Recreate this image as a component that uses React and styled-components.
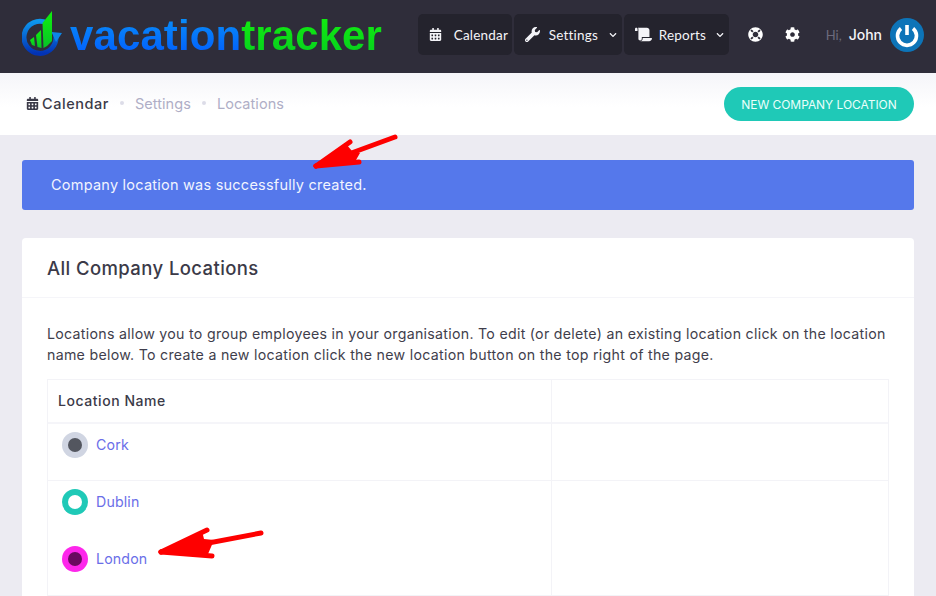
import React from 'react';
import styled, { createGlobalStyle } from 'styled-components';
import { FaCalendarAlt, FaWrench, FaScroll, FaLifeRing, FaCog, FaChevronDown } from 'react-icons/fa';

const GlobalStyle = createGlobalStyle`
  html, body {
    margin: 0;
    padding: 0;
    background: #ecebf2;
    font-family: "Inter", "Liberation Sans", sans-serif;
  }
  * { box-sizing: border-box; }
`

const Header = styled.header`
  height: 73px;
  background: #2f2d3a;
  display: flex;
  align-items: center;
  padding: 0 12px 4px 22px;
`

const Logo = styled.div`
  display: flex;
  align-items: center;
  flex: 1;
`

const LogoText = styled.span`
  font-family: "Liberation Sans", sans-serif;
  font-weight: 700;
  font-size: 42px;
  letter-spacing: 0.1px;
  margin-left: ${p => p.$offset || 0}px;
  margin-top: 3px;
  background-image: linear-gradient(${p => p.$from}, ${p => p.$to});
  -webkit-background-clip: text;
  background-clip: text;
  color: transparent;
  line-height: 48px;
`

const Nav = styled.nav`
  display: flex;
  align-items: center;
  gap: 2px;
`

const NavItem = styled.div`
  width: ${p => p.$width}px;
  height: 41px;
  background: #24232d;
  border-radius: 5px;
  display: flex;
  align-items: center;
  padding-left: 11px;
  color: #f4f4f8;
  font-family: "Lato", sans-serif;
  font-size: 13.5px;
  letter-spacing: 0.2px;
`

const NavLabel = styled.span`
  margin-left: ${p => p.$gap}px;
  flex: 1;
`

const Chevron = styled(FaChevronDown)`
  font-size: 8px;
  margin-right: 5px;
`

const Tools = styled.div`
  display: flex;
  align-items: center;
  margin-left: 19px;
  gap: 22px;
  color: #fff;
  font-size: 15px;
`

const User = styled.div`
  display: flex;
  align-items: center;
  margin-left: 26px;
`

const Hi = styled.span`
  color: #6c6a7c;
  font-family: "Lato", sans-serif;
  font-size: 13px;
  margin-right: 7px;
`

const Name = styled.span`
  color: #f4f4f8;
  font-weight: 500;
  font-size: 14px;
  margin-right: 8px;
`

const SubHeader = styled.div`
  height: 62px;
  background: linear-gradient(#f5f5f9, #fff 55%);
  display: flex;
  align-items: center;
  padding: 0 22px 0 26px;
`

const Crumbs = styled.div`
  flex: 1;
  display: flex;
  align-items: center;
  padding-bottom: 2px;
  font-size: 14.5px;
  letter-spacing: 0.05px;
  color: #afaec6;
`

const CrumbHome = styled.span`
  display: flex;
  align-items: center;
  gap: 3px;
  color: #3b3a48;
  font-weight: 500;
  letter-spacing: 0.55px;
`

const Dot = styled.span`
  width: 4px;
  height: 4px;
  border-radius: 50%;
  background: #dcdce8;
  margin: 0 ${p => p.$space}px;
`

const AddButton = styled.button`
  width: 190px;
  height: 34px;
  border: none;
  border-radius: 17px;
  background: #1fc9b7;
  color: #eafffb;
  font-family: "Inter", sans-serif;
  font-size: 12px;
  letter-spacing: -0.05px;
  padding: 0;
`

const Content = styled.main`
  padding: 25px 22px 0;
`

const Alert = styled.div`
  height: 50px;
  background: #5578eb;
  border-radius: 3px;
  display: flex;
  align-items: center;
  padding: 0 0 2px 29px;
  color: #f1f4ff;
  font-size: 14.5px;
  letter-spacing: 0.23px;
`

const Card = styled.section`
  margin-top: 28px;
  background: #fff;
  border-radius: 4px 4px 0 0;
  height: 358px;
`

const CardHead = styled.div`
  height: 60px;
  border-bottom: 1px solid #f5f5f9;
  display: flex;
  align-items: center;
  padding-left: 25px;
`

const CardTitle = styled.h3`
  margin: 0;
  font-size: 18.5px;
  font-weight: 500;
  color: #3b3a48;
  letter-spacing: 0.4px;
`

const CardBody = styled.div`
  padding: 25px 25px 0;
`

const Intro = styled.p`
  margin: 0 0 14px;
  font-size: 14.2px;
  line-height: 21px;
  letter-spacing: 0.28px;
  color: #3f3e4c;
`

const Table = styled.div`
  border: 1px solid #f3f3f7;
  display: grid;
  grid-template-columns: 504px 1fr;
`

const HeadCell = styled.div`
  height: 44px;
  border-bottom: 2px solid #f5f5f9;
  border-right: ${p => (p.$last ? 'none' : '1px solid #f3f3f7')};
  display: flex;
  align-items: center;
  padding: 0 0 2px 10px;
  font-size: 14px;
  font-weight: 500;
  color: #3b3a48;
  letter-spacing: 0.55px;
`

const Cell = styled.div`
  height: 57px;
  border-right: ${p => (p.$last ? 'none' : '1px solid #f3f3f7')};
  border-bottom: ${p => (p.$line ? '1px solid #f3f3f7' : 'none')};
  display: flex;
  align-items: flex-start;
  padding: 8px 0 0 14px;
`

const Swatch = styled.span`
  width: 26px;
  height: 26px;
  border-radius: 50%;
  background: ${p => p.$ring};
  display: flex;
  align-items: center;
  justify-content: center;

  &::after {
    content: "";
    width: ${p => p.$inner}px;
    height: ${p => p.$inner}px;
    border-radius: 50%;
    background: ${p => p.$core};
  }
`

const LocationLink = styled.a`
  margin: 3px 0 0 8px;
  font-size: 14.2px;
  line-height: 20px;
  letter-spacing: 0.15px;
  color: #6a6ee8;
`

const Arrow = styled.svg`
  position: absolute;
  left: ${p => p.$left}px;
  top: ${p => p.$top}px;
  pointer-events: none;
`

const locations = [
  { name: 'Cork', ring: '#d0d5e2', core: '#53565f', inner: 14, line: true },
  { name: 'Dublin', ring: '#1fc9b7', core: '#ffffff', inner: 14, line: false },
  { name: 'London', ring: '#fd27eb', core: '#690a60', inner: 14, line: false },
]

const LogoMark = () => (
  <svg width="45" height="50" viewBox="0 0 45 50">
    <defs>
      <linearGradient id="ring" x1="0" y1="0" x2="0" y2="1">
        <stop offset="0" stopColor="#0d96ee" />
        <stop offset="1" stopColor="#0232b4" />
      </linearGradient>
      <linearGradient id="bars" x1="0" y1="0" x2="0" y2="1">
        <stop offset="0" stopColor="#10f00c" />
        <stop offset="1" stopColor="#07c428" />
      </linearGradient>
    </defs>
    <path d="M33.8 25 A16 16 0 1 1 25 13" fill="none" stroke="url(#ring)" strokeWidth="5" />
    <path d="M29.5 22 L40 23 L34 32 Z" fill="#0d86e6" />
    <path d="M8 30 L12 27 L13 36 L10 35 Z" fill="url(#bars)" />
    <path d="M14 25 L19 20 L19.5 38 L15.5 37 Z" fill="url(#bars)" />
    <path d="M20.5 13 L30 1 L30 31 L25 36 L21.5 38 Z" fill="url(#bars)" />
  </svg>
)

const PowerBadge = () => (
  <svg width="34" height="34" viewBox="0 0 34 34">
    <circle cx="17" cy="17" r="17" fill="#0d74b8" />
    <path d="M11 10.5 A9.5 9.5 0 1 0 23 10.5" fill="none" stroke="#fff" strokeWidth="3.6" />
    <path d="M17 7 V17" stroke="#fff" strokeWidth="3.6" />
  </svg>
)

const RedArrow = ({ left, top, width, height, lines, body }) => (
  <Arrow $left={left} $top={top} width={width} height={height} viewBox={`0 0 ${width} ${height}`}>
    <path d={body} fill="#fe0000" />
    {lines.map(d => (
      <path key={d} d={d} fill="none" stroke="#fe0000" strokeWidth="5" strokeLinecap="round" />
    ))}
  </Arrow>
)

const App = () => (
  <>
    <GlobalStyle />
    <Header>
      <Logo>
        <LogoMark />
        <LogoText $offset={3} $from="#0a94f6" $to="#0058ff">vacation</LogoText>
        <LogoText $from="#14f00e" $to="#04cc20">tracker</LogoText>
      </Logo>
      <Nav>
        <NavItem $width={94}>
          <FaCalendarAlt size={13} />
          <NavLabel $gap={12}>Calendar</NavLabel>
        </NavItem>
        <NavItem $width={108}>
          <FaWrench size={15} />
          <NavLabel $gap={9}>Settings</NavLabel>
          <Chevron />
        </NavItem>
        <NavItem $width={105}>
          <FaScroll size={17} />
          <NavLabel $gap={7}>Reports</NavLabel>
          <Chevron />
        </NavItem>
      </Nav>
      <Tools>
        <FaLifeRing />
        <FaCog />
      </Tools>
      <User>
        <Hi>Hi,</Hi>
        <Name>John</Name>
        <PowerBadge />
      </User>
    </Header>
    <SubHeader>
      <Crumbs>
        <CrumbHome>
          <FaCalendarAlt size={13} />
          Calendar
        </CrumbHome>
        <Dot $space={11} />
        Settings
        <Dot $space={11} />
        Locations
      </Crumbs>
      <AddButton>NEW COMPANY LOCATION</AddButton>
    </SubHeader>
    <Content>
      <Alert>Company location was successfully created.</Alert>
      <Card>
        <CardHead>
          <CardTitle>All Company Locations</CardTitle>
        </CardHead>
        <CardBody>
          <Intro>
            Locations allow you to group employees in your organisation. To edit (or delete) an existing location click on the location name below. To create a new location click the new location button on the top right of the page.
          </Intro>
          <Table>
            <HeadCell>Location Name</HeadCell>
            <HeadCell $last />
            {locations.map(loc => (
              <React.Fragment key={loc.name}>
                <Cell $line={loc.line}>
                  <Swatch $ring={loc.ring} $core={loc.core} $inner={loc.inner} />
                  <LocationLink>{loc.name}</LocationLink>
                </Cell>
                <Cell $last $line={loc.line} />
              </React.Fragment>
            ))}
          </Table>
        </CardBody>
      </Card>
    </Content>
    <RedArrow
      left={310}
      top={132}
      width={92}
      height={40}
      lines={['M6 34 L40 10', 'M6 34 L85 5', 'M6 34 L49 30']}
      body="M4 35 L36 12 L42 19 L50 21 L46 28 L6 36 Z"
    />
    <RedArrow
      left={156}
      top={524}
      width={112}
      height={38}
      lines={['M5 28 L51 6', 'M5 28 L105 9', 'M5 28 L56 32']}
      body="M4 28 L46 7 L48 15 L58 16 L52 30 L6 30 Z"
    />
  </>
);

export default App;
